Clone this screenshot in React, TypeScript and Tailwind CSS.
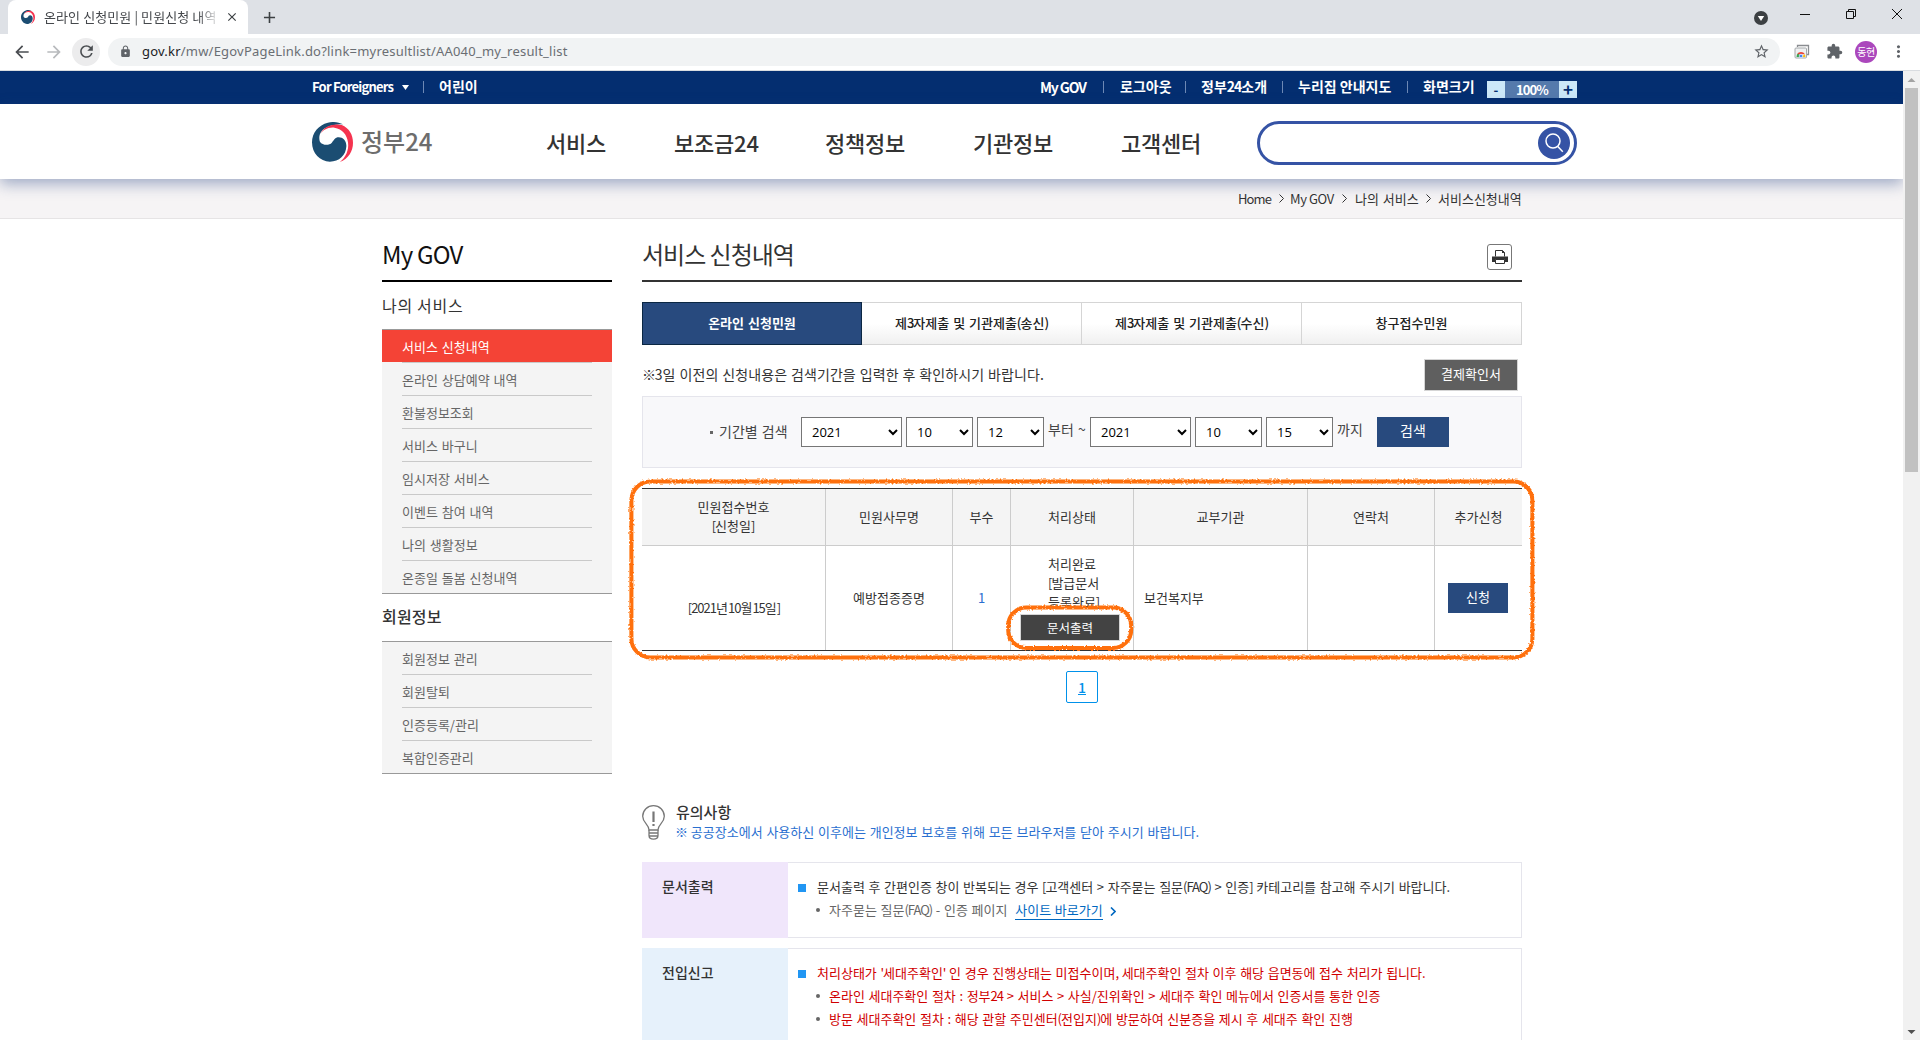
import type { ReactNode } from "react";
import { MdArrowBack, MdArrowForward, MdClose, MdExtension, MdLock, MdMoreVert, MdRefresh, MdStarBorder, MdAdd } from "react-icons/md";

const mainMenu = [
  { label: "서비스", className: "w-[60px]" },
  { label: "보조금24", className: "w-[83px]" },
  { label: "정책정보", className: "w-[80px]" },
  { label: "기관정보", className: "w-[80px]" },
  { label: "고객센터", className: "w-[80px]" },
];

const myServices = [
  "서비스 신청내역",
  "온라인 상담예약 내역",
  "환불정보조회",
  "서비스 바구니",
  "임시저장 서비스",
  "이벤트 참여 내역",
  "나의 생활정보",
  "온종일 돌봄 신청내역",
];

const memberInfo = ["회원정보 관리", "회원탈퇴", "인증등록/관리", "복합인증관리"];

function Tight({ children }: { children: ReactNode }) {
  return <span className="tracking-[-1px]">{children}</span>;
}

function GovMark({ className }: { className: string }) {
  return (
    <svg className={className} viewBox="36 36 124 120" preserveAspectRatio="none">
      <path
        fill="#1b4d72"
        d="M130 43C116 36 99 34 84 38C56 45 36 68 36 97C36 130 60 155 90 155C118 155 139 136 140 108C140 92 129 82 117 82C105 82 103 90 96 98C88 107 68 107 60 95C54 78 62 58 84 50C100 44 118 43 130 43Z"
      />
      <path
        fill="#f5334f"
        d="M60 74C72 46 104 40 126 45C148 54 160 74 160 98C160 124 146 146 120 156C138 142 148 120 145 98C142 74 128 57 104 53C84 51 68 60 60 74Z"
      />
    </svg>
  );
}

function BrowserChrome() {
  return (
    <div className="shrink-0 font-['Noto_Sans','Noto_Sans_CJK_KR',sans-serif]">
      <div className="flex h-[34px] justify-between bg-[#dee1e6]">
        <div className="flex items-center pl-2">
          <div className="flex h-full w-[240px] items-center rounded-t-lg bg-white pl-[13px]">
            <GovMark className="h-[14px] w-[14px] shrink-0" />
            <span className="ml-[9px] w-[176px] overflow-hidden pb-px font-['Noto_Sans_CJK_KR'] text-[13px] tracking-[0.1px] whitespace-nowrap text-[#45484c] [mask-image:linear-gradient(to_right,black_88%,transparent)]">
              온라인 신청민원 | 민원신청 내역
            </span>
            <MdClose className="ml-[5px] h-[14px] w-[14px] text-[#3c4043]" />
          </div>
          <MdAdd className="ml-[12px] h-[19px] w-[19px] text-[#3c4043]" />
        </div>
        <div className="flex items-center pr-[18px]">
          <svg className="mt-px mr-[32px] h-[14px] w-[14px]" viewBox="0 0 14 14">
            <circle cx="7" cy="7" r="7" fill="#3c4043" />
            <path d="M3.8 5h6.4L7 10z" fill="#fff" />
          </svg>
          <svg className="mb-[6px] h-[12px] w-[102px]" viewBox="0 0 102 12" fill="none" stroke="#111">
            <path d="M0 6.5h10" />
            <path d="M46.5 3.5h7v7h-7zM48.5 3.5v-2h7v7h-2" />
            <path d="M92 1l10 10M102 1L92 11" />
          </svg>
        </div>
      </div>
      <div className="flex h-9 items-center border-b border-white bg-white text-[#5f6368]">
        <MdArrowBack className="ml-3 h-[20px] w-[20px] text-[#4a4d51]" />
        <MdArrowForward className="ml-3 h-[20px] w-[20px] text-[#b8babd]" />
        <div className="ml-2 flex h-7 w-7 items-center justify-center rounded-full bg-[#ececed]">
          <MdRefresh className="h-[19px] w-[19px] text-[#4a4d51]" />
        </div>
        <div className="ml-2 flex h-7 w-[1672px] items-center rounded-full bg-[#f1f3f4] pr-[10px] pl-[11px]">
          <MdLock className="h-[13px] w-[13px]" />
          <span className="ml-[10px] flex-1 text-[13px] tracking-[0.21px] text-[#6a6e73]">
            <span className="text-[#202124]">gov.kr</span>/mw/EgovPageLink.do?link=myresultlist/AA040_my_result_list
          </span>
          <MdStarBorder className="h-[17px] w-[17px]" />
        </div>
        <svg className="ml-[14px] h-[16px] w-[16px]" viewBox="0 0 16 16">
          <path d="M3.5 3V1.5h11v9H13" fill="none" stroke="#8a8d91" strokeWidth="1.3" />
          <rect x="1" y="4" width="11.5" height="10" rx="1" fill="#eef0f1" stroke="#a5a8ab" />
          <path d="M2.5 13a4.4 4.4 0 0 1 2.2-4.2L6.8 13z" fill="#34a853" />
          <path d="M3.2 10.2a4.4 4.4 0 0 1 7.6 0z" fill="#ea4335" />
          <path d="M10.8 10.2A4.4 4.4 0 0 1 11.3 13H7z" fill="#fbbc05" />
          <circle cx="7" cy="12" r="1.8" fill="#4285f4" stroke="#fff" strokeWidth=".6" />
        </svg>
        <MdExtension className="ml-[16px] h-[17px] w-[17px]" />
        <span className="ml-[12px] flex h-[22px] w-[22px] items-center justify-center rounded-full bg-[#ab47bc] pb-px font-['Noto_Sans_CJK_KR'] text-[10px] tracking-[-0.5px] whitespace-nowrap text-white">
          동현
        </span>
        <MdMoreVert className="ml-[12px] h-[19px] w-[19px]" />
      </div>
      <div className="h-px bg-[#d9dce0]" />
    </div>
  );
}

function TopBar() {
  return (
    <div className="flex h-[33px] items-center bg-[#042e70] pb-px pl-[312px] text-[14px] font-bold whitespace-nowrap text-white">
      <span className="w-[84px] text-[13px] tracking-[-0.8px]">For Foreigners</span>
      <svg className="ml-[6px] h-[5px] w-[7px]" viewBox="0 0 7 5">
        <path d="M0 0h7L3.5 5z" fill="#fff" />
      </svg>
      <i className="ml-[14px] h-3 w-px bg-[#6d88b5]" />
      <span className="ml-[15px] w-[601px] pb-px">어린이</span>
      <span className="w-[51px] tracking-[-1.1px]">My GOV</span>
      <i className="ml-[12px] h-3 w-px bg-[#6d88b5]" />
      <span className="ml-[16px] w-[53px] pb-px">로그아웃</span>
      <i className="ml-[12px] h-3 w-px bg-[#6d88b5]" />
      <span className="ml-[15px] w-[68px] pb-px">
        정부<Tight>24</Tight>소개
      </span>
      <i className="ml-[13px] h-3 w-px bg-[#6d88b5]" />
      <span className="ml-[15px] w-[96px] pb-px">누리집 안내지도</span>
      <i className="ml-[13px] h-3 w-px bg-[#6d88b5]" />
      <span className="ml-[15px] w-[53px] pb-px">화면크기</span>
      <div className="mt-[5px] ml-[11px] flex h-[17px] items-center text-center text-[13px] leading-[17px]">
        <span className="h-full w-[18px] bg-[#cce8f8] text-[#042e70]">-</span>
        <span className="h-full w-[54px] bg-[#557aac] tracking-[-0.9px]">100%</span>
        <span className="h-full w-[18px] bg-[#cce8f8] text-[17px] leading-[15px] text-[#042e70]">+</span>
      </div>
    </div>
  );
}

function Header() {
  return (
    <header className="relative z-10 flex h-[75px] items-center bg-white pl-[312px] shadow-[0_5px_14px_rgba(40,70,130,0.42)]">
      <GovMark className="h-[40px] w-[41px]" />
      <span className="ml-[8px] w-[72px] pb-px text-[24px] font-medium tracking-[0px] whitespace-nowrap text-[#6d6d6d]">정부24</span>
      <nav className="ml-[113px] flex gap-[68px] pt-[2px] text-[22px] font-medium tracking-[-0.2px] whitespace-nowrap text-[#333]">
        {mainMenu.map((item) => (
          <a key={item.label} className={item.className}>
            {item.label}
          </a>
        ))}
      </nav>
      <div className="mt-[3px] ml-[56px] flex h-[44px] w-[320px] items-center justify-end rounded-full border-[3px] border-[#3553a5] pr-[4px]">
        <svg className="h-[32px] w-[32px]" viewBox="0 0 32 32" fill="none" stroke="#fff" strokeWidth="1.5">
          <circle cx="16" cy="16" r="16" fill="#3553a5" stroke="none" />
          <circle cx="15" cy="14" r="7" />
          <path d="M19.8 19.5l5 5.2" />
        </svg>
      </div>
    </header>
  );
}

function Chevron({ className }: { className: string }) {
  return (
    <svg className={className} viewBox="0 0 5 9" fill="none" stroke="currentColor">
      <path d="M.5.5l4 4-4 4" />
    </svg>
  );
}

function Breadcrumb() {
  return (
    <div className="flex h-[40px] items-center border-b border-[#e6e4e5] bg-[#f6f4f5] pl-[1238px] text-[13px] whitespace-nowrap text-[#333]">
      <span className="w-[32px] tracking-[-0.9px]">Home</span>
      <Chevron className="ml-[9px] h-[9px] w-[5px]" />
      <span className="ml-[6px] w-[46px] tracking-[-0.4px]">My GOV</span>
      <Chevron className="ml-[6px] h-[9px] w-[5px]" />
      <span className="ml-[8px] w-[64px] [word-spacing:1px]">나의 서비스</span>
      <Chevron className="ml-[7px] h-[9px] w-[5px]" />
      <span className="ml-[7px]">서비스신청내역</span>
    </div>
  );
}

function SideList({ items, active }: { items: string[]; active?: string }) {
  return (
    <ul className="border-y border-[#999] bg-[#f4f4f4] text-[13px] [word-spacing:1px]">
      {items.map((item, i) => {
        if (item === active) {
          return (
            <li key={item} className="h-[32px] bg-[#f44336] px-5 leading-[33px] text-white">
              {item}
            </li>
          );
        }
        return (
          <li key={item} className={i === 0 ? "h-[32px] px-5 text-[#666]" : "h-[33px] px-5 text-[#666]"}>
            <span className={i === 0 ? "block h-full leading-[33px]" : "block h-full border-t border-[#c9c9c9] leading-[33px]"}>
              {item}
            </span>
          </li>
        );
      })}
    </ul>
  );
}

function Sidebar() {
  return (
    <aside className="w-[230px] shrink-0">
      <h2 className="flex h-[63px] items-center border-b-2 border-black pt-[8px] text-[24px] tracking-[-0.8px] text-[#111]">
        My GOV
      </h2>
      <h3 className="h-[47px] text-[16px] leading-[46px] tracking-[0.7px] text-[#333]">나의 서비스</h3>
      <SideList items={myServices} active="서비스 신청내역" />
      <h3 className="h-[47px] text-[16px] leading-[45px] font-medium tracking-[0.2px] text-[#333]">회원정보</h3>
      <SideList items={memberInfo} />
    </aside>
  );
}

function DateSelect({ value, wide }: { value: string; wide?: boolean }) {
  return (
    <select
      defaultValue={value}
      className={
        (wide ? "w-[101px]" : "w-[67px]") +
        " h-[30px] border border-[#767676] bg-white pl-[6px] font-['Open_Sans'] text-[13px] text-black"
      }
    >
      <option>{value}</option>
    </select>
  );
}

function SearchBar() {
  return (
    <div className="flex h-[72px] items-center border border-[#e5e5ec] bg-[#f8f8fa] text-[14px] whitespace-nowrap text-[#444]">
      <i className="ml-[67px] h-[3px] w-[3px] bg-[#666]" />
      <span className="ml-[6px] w-[70px] pb-[2px] [word-spacing:1px]">기간별 검색</span>
      <div className="ml-[12px] flex gap-1">
        <DateSelect value="2021" wide />
        <DateSelect value="10" />
        <DateSelect value="12" />
      </div>
      <span className="ml-1 w-[42px] pb-[5px] [word-spacing:1px]">부터 ~</span>
      <div className="flex gap-1">
        <DateSelect value="2021" wide />
        <DateSelect value="10" />
        <DateSelect value="15" />
      </div>
      <span className="ml-1 w-[40px] pb-[5px]">까지</span>
      <button type="button" className="h-[30px] w-[72px] bg-[#284a7e] pb-[4px] text-white">
        검색
      </button>
    </div>
  );
}

function Tabs() {
  return (
    <div className="mt-5 flex h-[43px] text-[13px] font-medium [word-spacing:1px] text-[#222]">
      <div className="flex w-[220px] items-center justify-center border border-[#0b2743] bg-[#284a7e] pb-px font-bold text-white">
        온라인 신청민원
      </div>
      <div className="flex flex-1 border border-l-0 border-[#d5d5d5] bg-gradient-to-b from-white from-50% to-[#f0f0f0]">
        <span className="flex w-[220px] items-center justify-center border-r border-[#d5d5d5] pb-px whitespace-pre">
          제<Tight>3</Tight>자제출 및 기관제출<Tight>(</Tight>송신<Tight>)</Tight>
        </span>
        <span className="flex w-[220px] items-center justify-center border-r border-[#d5d5d5] pb-px whitespace-pre">
          제<Tight>3</Tight>자제출 및 기관제출<Tight>(</Tight>수신<Tight>)</Tight>
        </span>
        <span className="flex flex-1 items-center justify-center pb-px">창구접수민원</span>
      </div>
    </div>
  );
}

// 신청내역 표 위의 주황색 강조 표시
function Highlight() {
  return (
    <svg className="pointer-events-none absolute top-[-16px] left-[-20px] h-[196px] w-[920px]" viewBox="0 0 920 196" fill="none">
      <filter id="crayon" x="-2%" y="-5%" width="104%" height="110%">
        <feTurbulence type="fractalNoise" baseFrequency="0.5" numOctaves="2" seed="4" />
        <feDisplacementMap in="SourceGraphic" scale="3" xChannelSelector="R" yChannelSelector="G" />
      </filter>
      <g stroke="#ff6f0a" strokeWidth="4" filter="url(#crayon)">
        <rect x="9.4" y="9.4" width="901" height="176" rx="19" />
        <rect x="386.2" y="135.6" width="123" height="40.3" rx="18" />
      </g>
    </svg>
  );
}

function ResultTable() {
  const cols = "grid grid-cols-[184px_127px_58px_123px_174px_127px_87px]";
  const th = "flex items-center justify-center border-r border-[#ccc] pb-[2px]";
  return (
    <div className="relative mt-5 text-[13px] text-[#333]">
      <div className={cols + " h-[58px] border-t border-b border-t-[#333] border-b-[#ccc] bg-[#f4f4f4] leading-[19px]"}>
        <div className={th + " flex-col"}>
          <span>민원접수번호</span>
          <span>
            <Tight>[</Tight>신청일]
          </span>
        </div>
        <div className={th}>민원사무명</div>
        <div className={th}>부수</div>
        <div className={th}>처리상태</div>
        <div className={th}>교부기관</div>
        <div className={th}>연락처</div>
        <div className="flex items-center justify-center pb-[2px]">추가신청</div>
      </div>
      <div className={cols + " h-[105px] border-b border-[#333] leading-[19px]"}>
        <div className={th + " pt-5 pl-px"}>
          <Tight>[2021</Tight>년<Tight>10</Tight>월<Tight>15</Tight>일<Tight>]</Tight>
        </div>
        <div className={th}>예방접종증명</div>
        <div className={th + " text-[#2a6fd0]"}>1</div>
        <div className="border-r border-[#ccc] pt-[8px]">
          <p className="pl-[37px]">
            처리완료
            <br />
            <Tight>[</Tight>발급문서
            <br />
            등록완료<Tight>]</Tight>
          </p>
          <button type="button" className="mt-[3px] ml-[9px] block h-[27px] w-[100px] border border-[#d5d5d5] bg-[#434343] text-[12.5px] leading-[23px] text-white">
            문서출력
          </button>
        </div>
        <div className="flex items-center border-r border-[#ccc] pb-[2px] pl-[10px]">보건복지부</div>
        <div className={th} />
        <div className="flex items-center pl-[13px]">
          <button type="button" className="h-[30px] w-[60px] bg-[#284a7e] pb-[3px] text-white">
            신청
          </button>
        </div>
      </div>
      <Highlight />
    </div>
  );
}

function NoticeBlock({ title, tone, children }: { title: string; tone: string; children: ReactNode }) {
  return (
    <div className="flex">
      <div className={"w-[146px] pt-[13px] pl-5 text-[14px] leading-[23px] font-medium text-[#333] " + tone}>{title}</div>
      <div className="flex-1 border border-l-0 border-[#e5e5ec] pt-[12px] pl-[10px] text-[13px] leading-[23px] whitespace-nowrap [word-spacing:0.7px]">
        {children}
      </div>
    </div>
  );
}

function NoticeHead({ children, className }: { children: ReactNode; className: string }) {
  return (
    <p className={"flex items-center " + className}>
      <i className="mt-[2px] mr-[11px] h-2 w-2 bg-[#2196f3]" />
      <span>{children}</span>
    </p>
  );
}

function NoticeItem({ children, className }: { children: ReactNode; className: string }) {
  return (
    <p className={"flex items-center pl-[18px] " + className}>
      <i className="mr-[9px] h-1 w-1 rounded-full bg-[#666]" />
      <span>{children}</span>
    </p>
  );
}

function Notices() {
  return (
    <section className="mt-[102px]">
      <div className="flex h-[57px]">
        <svg className="h-[35px] w-[23px]" viewBox="0 0 23 35" fill="none" stroke="#777" strokeWidth="1.3">
          <path d="M7 25C7 19 .7 18 .7 11.3a10.8 10.6 0 0 1 21.6 0C22.3 18 16 19 16 25z" />
          <path d="M7 25v5.5c0 2.4 1.8 3.7 4.5 3.7s4.5-1.3 4.5-3.7V25M7 28h9M7 31h9" />
          <path d="M11.5 6.5V17M11.5 19v2" strokeWidth="2.2" />
        </svg>
        <div className="pl-[10px] whitespace-nowrap">
          <p className="-mt-[5px] pl-px text-[15px] leading-[23px] font-medium text-[#333]">유의사항</p>
          <p className="text-[13px] leading-[18px] [word-spacing:0.9px] text-[#2a6fd0]">
            <Tight>※</Tight> 공공장소에서 사용하신 이후에는 개인정보 보호를 위해 모든 브라우저를 닫아 주시기 바랍니다.
          </p>
        </div>
      </div>
      <div className="flex h-[76px] flex-col [&>*]:flex-1">
        <NoticeBlock title="문서출력" tone="bg-[#f0e6fb]">
          <NoticeHead className="text-[#333]">
            문서출력 후 간편인증 창이 반복되는 경우 <Tight>[</Tight>고객센터 &gt; 자주묻는 질문<Tight>(FAQ)</Tight> &gt; 인증<Tight>]</Tight> 카테고리를 참고해 주시기
            바랍니다.
          </NoticeHead>
          <NoticeItem className="text-[#666]">
            자주묻는 질문<Tight>(FAQ)</Tight> - 인증 페이지
            <a className="ml-[8px] border-b border-[#0068c0] text-[#0068c0]">사이트 바로가기</a>
            <Chevron className="ml-[7px] inline h-[9px] w-[6px] stroke-[#0068c0] stroke-[1.6]" />
          </NoticeItem>
        </NoticeBlock>
      </div>
      <div className="mt-[10px] flex h-[110px] flex-col [&>*]:flex-1">
        <NoticeBlock title="전입신고" tone="bg-[#e6f1fb]">
          <NoticeHead className="text-[#d00000]">
            처리상태가 <Tight>'</Tight>세대주확인<Tight>'</Tight> 인 경우 진행상태는 미접수이며<Tight>,</Tight> 세대주확인 절차 이후 해당 읍면동에 접수 처리가 됩니다.
          </NoticeHead>
          <NoticeItem className="text-[#d00000]">
            온라인 세대주확인 절차 : 정부<Tight>24</Tight> &gt; 서비스 &gt; 사실/진위확인 &gt; 세대주 확인 메뉴에서 인증서를 통한 인증
          </NoticeItem>
          <NoticeItem className="text-[#d00000]">
            방문 세대주확인 절차 : 해당 관할 주민센터<Tight>(</Tight>전입지<Tight>)</Tight>에 방문하여 신분증을 제시 후 세대주 확인 진행
          </NoticeItem>
        </NoticeBlock>
      </div>
    </section>
  );
}

function Scrollbar() {
  return (
    <div className="flex w-[17px] shrink-0 flex-col items-center bg-[#f1f1f1]">
      <svg className="h-[17px] w-[17px]" viewBox="0 0 17 17">
        <path d="M4.5 11L8.5 7l4 4z" fill="#a3a3a3" />
      </svg>
      <div className="h-[384px] w-[13px] bg-[#c1c1c1]" />
      <svg className="mt-auto h-[17px] w-[17px]" viewBox="0 0 17 17">
        <path d="M4.5 7l4 4 4-4z" fill="#505050" />
      </svg>
    </div>
  );
}

export default function App() {
  return (
    <div className="flex h-[1040px] w-[1920px] flex-col overflow-hidden bg-white font-['Noto_Sans_CJK_KR',sans-serif]">
      <BrowserChrome />
      <div className="flex min-h-0 flex-1">
        <div className="w-[1903px] overflow-hidden">
          <TopBar />
          <Header />
          <Breadcrumb />
          <div className="flex pl-[382px]">
            <Sidebar />
            <main className="ml-[30px] w-[880px]">
              <div className="flex h-[63px] items-center justify-between border-b-2 border-[#333] pt-[8px]">
                <h1 className="text-[24px] tracking-[-1px] text-[#333]">서비스 신청내역</h1>
                <div className="mt-[7px] mr-[10px] flex h-[26px] w-[25px] items-center justify-center rounded-[3px] border border-[#777]">
                  <svg className="h-[14px] w-[16px]" viewBox="0 0 16 14">
                    <path d="M0 6.5h16V12h-3.2V9.5H3.2V12H0z" fill="#333" />
                    <path d="M3.5 6.5v-6h7l2 2v4M3.5 9.5h9v4h-9z" fill="none" stroke="#333" />
                    <path d="M10 0v3h3z" fill="#333" />
                  </svg>
                </div>
              </div>
              <Tabs />
              <div className="flex h-[51px] items-center justify-between pt-[9px] pr-1">
                <p className="pb-[2px] text-[14px] tracking-[0.1px] text-[#333] [word-spacing:0.6px]">
                  <span className="tracking-[-2.5px]">※ </span>3일 이전의 신청내용은 검색기간을 입력한 후 확인하시기 바랍니다.
                </p>
                <button type="button" className="h-[32px] w-[94px] border border-[#d5d5d5] bg-[#5f5f5f] pb-[2px] text-[13px] text-white">
                  결제확인서
                </button>
              </div>
              <SearchBar />
              <ResultTable />
              <div className="mt-5 flex justify-center">
                <a className="flex h-8 w-8 items-center justify-center rounded-[2px] border border-[#0091ea] text-[14px] font-medium text-[#0091ea] underline">
                  1
                </a>
              </div>
              <Notices />
            </main>
          </div>
        </div>
        <Scrollbar />
      </div>
    </div>
  );
}
